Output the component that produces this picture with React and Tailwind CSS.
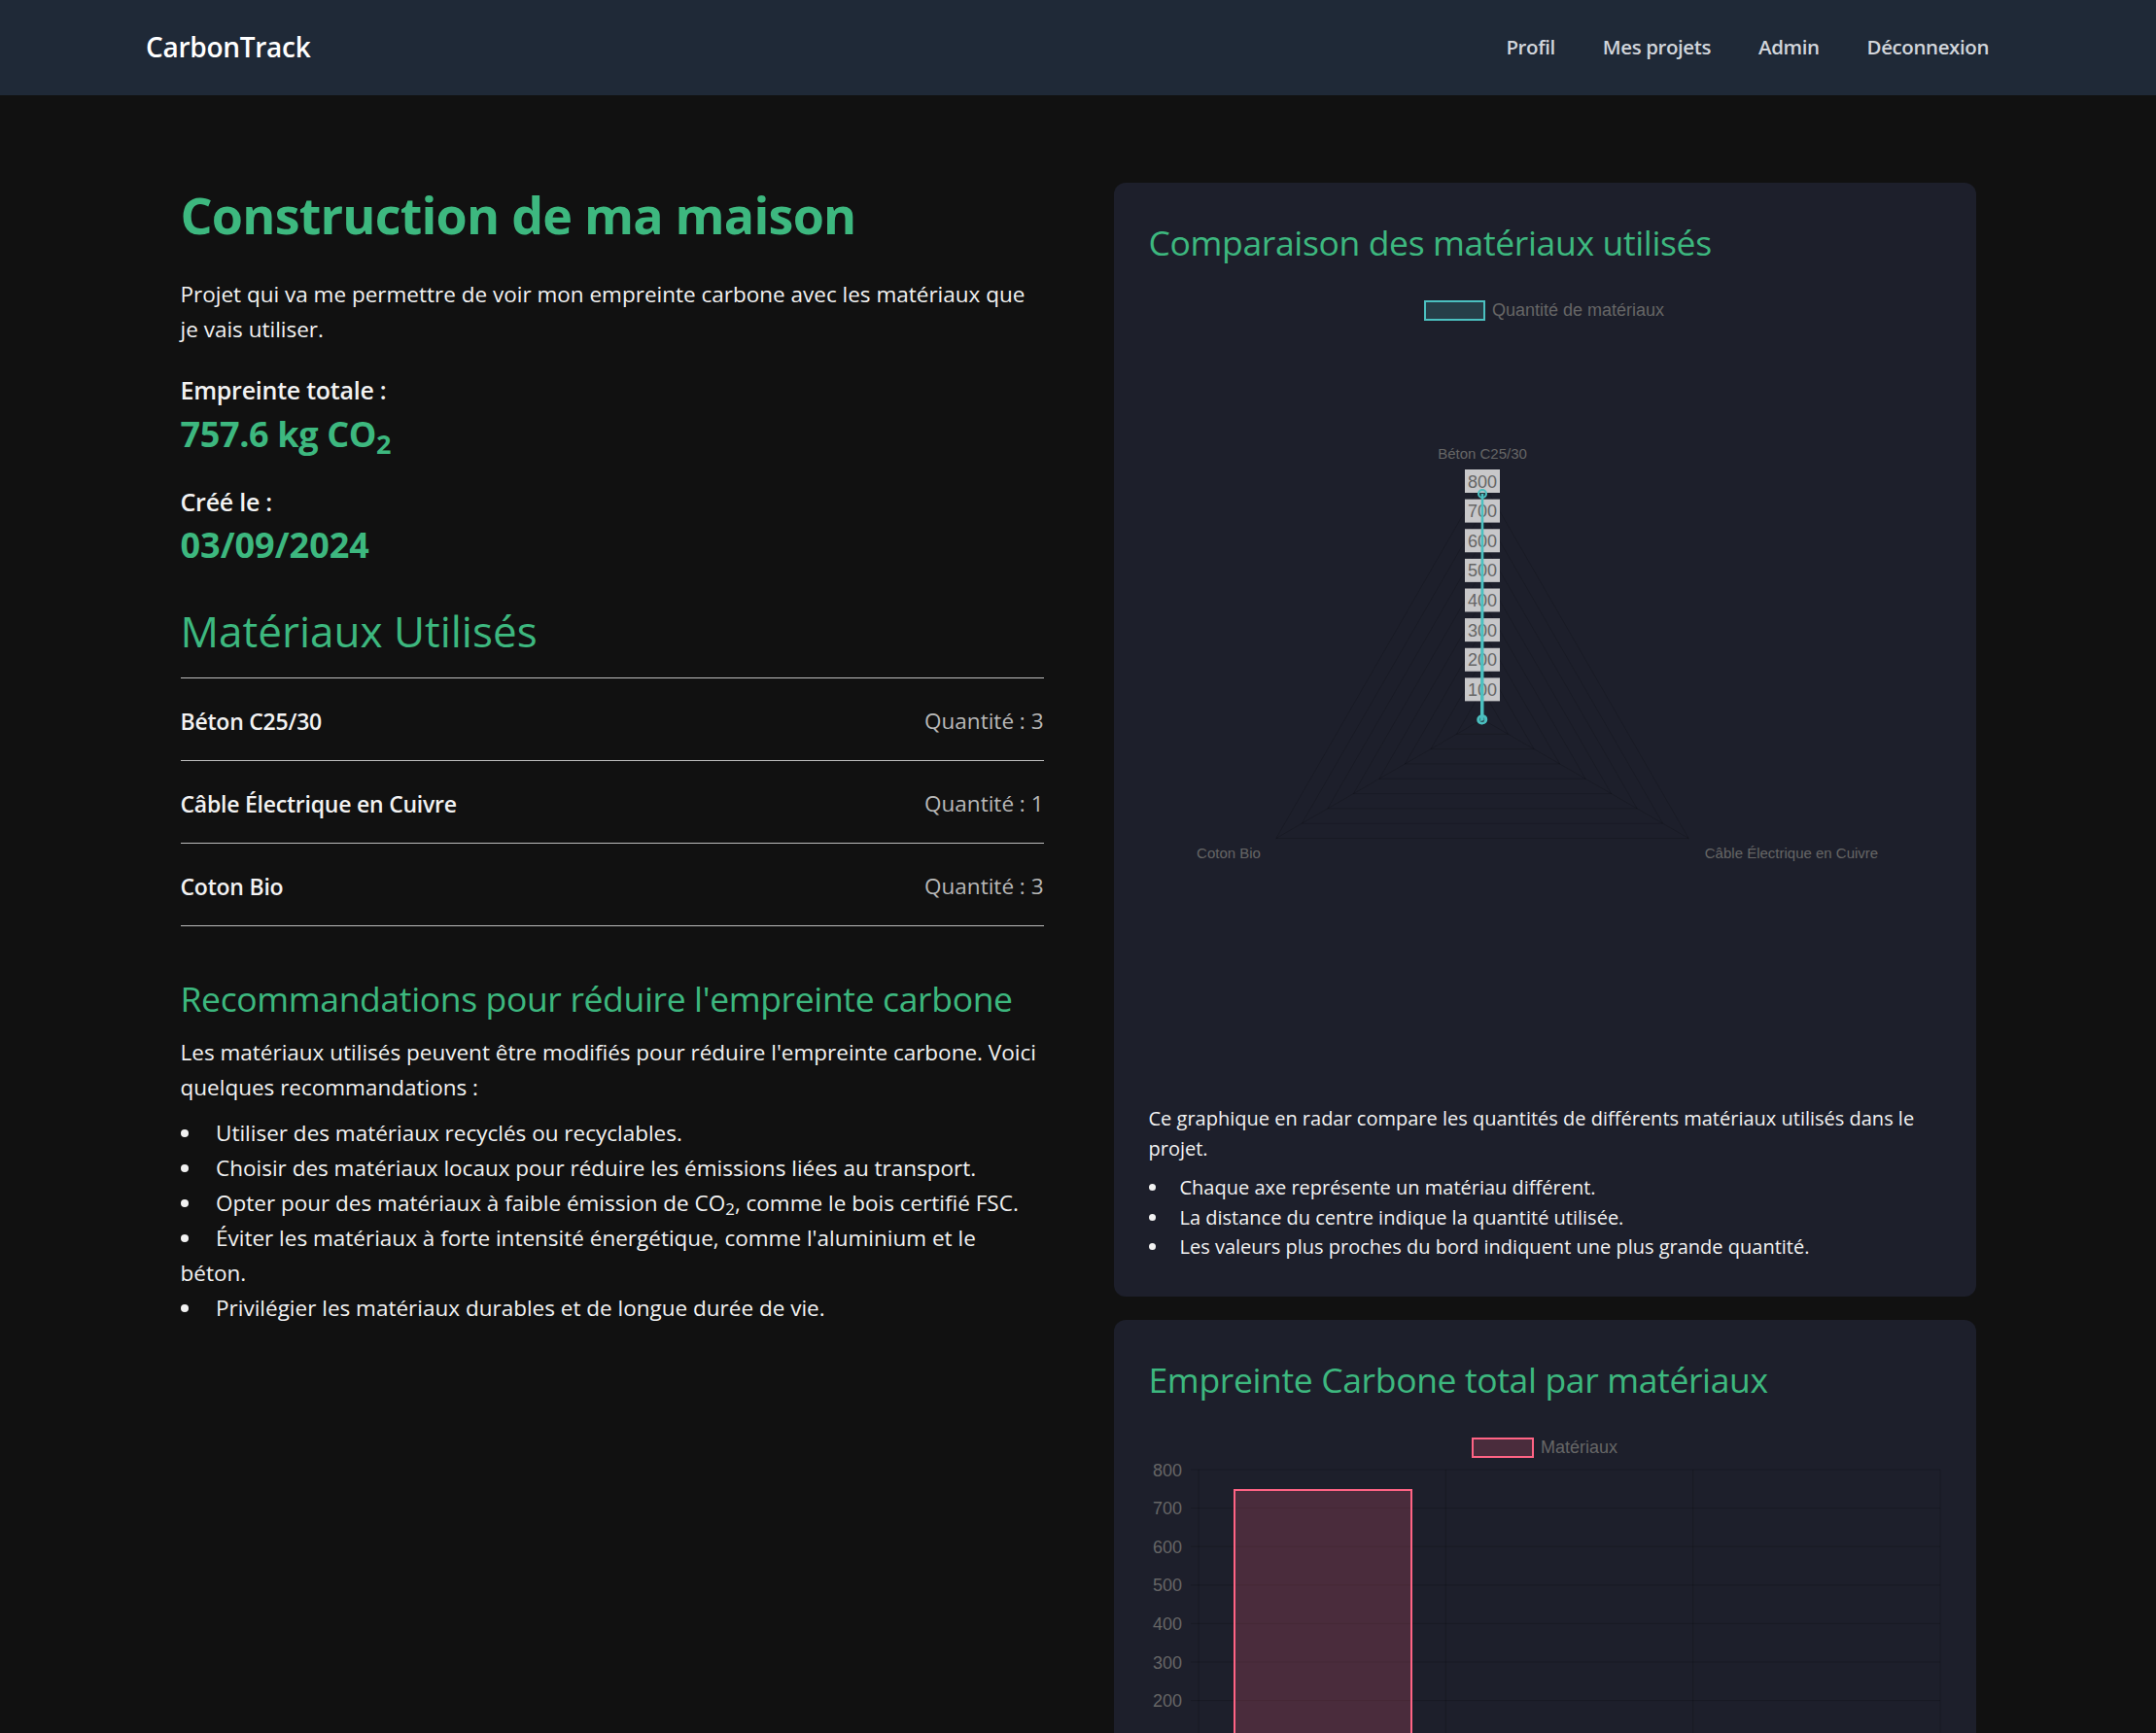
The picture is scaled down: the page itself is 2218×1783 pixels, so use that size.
import React from "react";

const materials = [
    { name: "Béton C25/30", qty: 3 },
    { name: "Câble Électrique en Cuivre", qty: 1 },
    { name: "Coton Bio", qty: 3 },
];

// radar geometry (chart coordinates)
const CX = 343;
const CY = 450;
const R = 245;

const pt = (r, i) => {
    const a = (-90 + i * 120) * (Math.PI / 180);
    return [CX + r * Math.cos(a), CY + r * Math.sin(a)];
};

const RadarChart = () => {
    const rings = [1, 2, 3, 4, 5, 6, 7, 8];
    const values = [757.6, 1, 3];
    const data = values.map((v, i) => pt((v / 800) * R, i));

    return (
        <svg width="815" height="845" className="block mt-[19px]" style={{ fontFamily: '"Liberation Sans", Arial, sans-serif' }}>
            {/* legend */}
            <rect x="284" y="20" width="61" height="19" fill="rgba(75,192,192,0.2)" stroke="#4bc0c0" strokeWidth="2" />
            <text x="353" y="35" fontSize="18" fill="#666">Quantité de matériaux</text>

            {/* grid */}
            {rings.map((k) => (
                <polygon
                    key={k}
                    points={[0, 1, 2].map((i) => pt(k * (R / 8), i).join(",")).join(" ")}
                    fill="none"
                    stroke="rgba(0,0,0,0.15)"
                    strokeWidth="1"
                />
            ))}
            {[0, 1, 2].map((i) => {
                const [x, y] = pt(R, i);
                return <line key={i} x1={CX} y1={CY} x2={x} y2={y} stroke="rgba(0,0,0,0.15)" strokeWidth="1" />;
            })}

            {/* point labels */}
            <text x={CX} y="182" fontSize="15" fill="#666" textAnchor="middle">Béton C25/30</text>
            <text x="82" y="593" fontSize="15" fill="#666" textAnchor="middle">Coton Bio</text>
            <text x="661" y="593" fontSize="15" fill="#666" textAnchor="middle">Câble Électrique en Cuivre</text>

            {/* ticks */}
            {rings.map((k) => {
                const y = CY - k * (R / 8);
                return (
                    <g key={k}>
                        <rect x={CX - 18} y={y - 12} width="36" height="24" fill="#c8c8ca" />
                        <text x={CX} y={y + 6.5} fontSize="18" fill="#666" textAnchor="middle">{k * 100}</text>
                    </g>
                );
            })}

            {/* dataset */}
            <polygon points={data.map((p) => p.join(",")).join(" ")} fill="rgba(75,192,192,0.2)" stroke="#4bc0c0" strokeWidth="2.5" />
            {data.map(([x, y], i) => (
                <circle key={i} cx={x} cy={y} r="4" fill="rgba(75,192,192,0.2)" stroke="#4bc0c0" strokeWidth="2" />
            ))}
        </svg>
    );
};

const BarChart = () => {
    const top = 53;
    const step = 39.6;
    const bottom = top + step * 8;
    const left = 51;
    const right = 814;
    const col = (right - left) / 3;
    const labels = ["Béton C25/30", "Câble Électrique en Cuivre", "Coton Bio"];

    return (
        <svg width="815" height="430" className="block mt-[18px]" style={{ fontFamily: '"Liberation Sans", Arial, sans-serif' }}>
            {/* legend */}
            <rect x="333" y="21" width="62" height="19" fill="rgba(255,99,132,0.2)" stroke="#ff6384" strokeWidth="2" />
            <text x="403" y="36" fontSize="18" fill="#666">Matériaux</text>

            {/* grid */}
            {[8, 7, 6, 5, 4, 3, 2, 1, 0].map((v, i) => {
                const y = top + step * i;
                return (
                    <g key={v}>
                        <line x1={left - 8} y1={y} x2={right} y2={y} stroke="rgba(0,0,0,0.18)" strokeWidth="1" />
                        <text x="34" y={y + 6.5} fontSize="18" fill="#666" textAnchor="end">{v * 100}</text>
                    </g>
                );
            })}
            {[0, 1, 2, 3].map((i) => (
                <line key={i} x1={left + col * i} y1={top} x2={left + col * i} y2={bottom + 8} stroke="rgba(0,0,0,0.18)" strokeWidth="1" />
            ))}

            {/* bar */}
            <rect x="88" y="74" width="182" height={bottom - 74} fill="rgba(255,99,132,0.2)" stroke="#ff6384" strokeWidth="2" />

            {labels.map((l, i) => (
                <text key={l} x={left + col * i + col / 2} y={bottom + 28} fontSize="18" fill="#666" textAnchor="middle">{l}</text>
            ))}
        </svg>
    );
};

const App = () => {
    return (
        <div className="min-h-screen bg-[#111111] font-['Open_Sans','Noto_Sans',sans-serif] text-[#f2f2f2]">
            {/* NAVBAR */}
            <div className="flex h-[98px] items-center justify-between bg-[#1f2937] pl-[150px] pr-[172px] pb-[2px]">
                <div className="text-[28px] font-semibold text-white tracking-[-0.01em]">CarbonTrack</div>
                <div className="flex items-center gap-[49px] text-[20.5px] font-semibold text-[#d1d5db] tracking-[-0.02em]">
                    <a>Profil</a>
                    <a>Mes projets</a>
                    <a>Admin</a>
                    <a>Déconnexion</a>
                </div>
            </div>

            {/* CONTENT */}
            <div className="mx-auto grid w-[1847px] grid-cols-[888px_887px] items-start gap-x-[72px] pt-[89px]">
                {/* left column */}
                <div className="flex flex-col">
                    <h1 className="text-[52px] font-bold leading-[68px] text-[#3db87f] tracking-[-0.015em]">Construction de ma maison</h1>
                    <p className="mt-[30px] text-[22.5px] leading-[36px]">
                        Projet qui va me permettre de voir mon empreinte carbone avec les matériaux que je vais utiliser.
                    </p>

                    <div className="mt-[26px] text-[25px] font-semibold leading-[36px] tracking-[-0.01em]">Empreinte totale :</div>
                    <div className="mt-[5px] text-[36px] font-bold leading-[46px] text-[#3db87f] tracking-[-0.01em]">
                        757.6 kg CO<sub>2</sub>
                    </div>

                    <div className="mt-[28px] text-[25px] font-semibold leading-[36px] tracking-[-0.01em]">Créé le :</div>
                    <div className="mt-[4px] text-[36px] font-bold leading-[46px] text-[#3db87f]">03/09/2024</div>

                    <h2 className="mt-[37px] text-[44px] font-medium leading-[56px] text-[#3db87f]">Matériaux Utilisés</h2>

                    <div className="mt-[20px] border-t border-[#bdbdbd]">
                        {materials.map((m) => (
                            <div key={m.name} className="flex h-[85px] items-center justify-between border-b border-[#bdbdbd] pt-[4px]">
                                <span className="text-[23px] font-semibold tracking-[-0.01em]">{m.name}</span>
                                <span className="text-[22.5px] text-[#b8b8b8]">Quantité : {m.qty}</span>
                            </div>
                        ))}
                    </div>

                    <h3 className="mt-[52px] text-[35.5px] leading-[44px] text-[#3db87f] tracking-[-0.01em]">
                        Recommandations pour réduire l'empreinte carbone
                    </h3>
                    <p className="mt-[16px] text-[22.5px] leading-[36px]">
                        Les matériaux utilisés peuvent être modifiés pour réduire l'empreinte carbone. Voici quelques recommandations :
                    </p>
                    <ul className="mt-[11px] list-inside list-disc text-[22.5px] leading-[36px]">
                        <li><span className="ml-[5px]">Utiliser des matériaux recyclés ou recyclables.</span></li>
                        <li><span className="ml-[5px]">Choisir des matériaux locaux pour réduire les émissions liées au transport.</span></li>
                        <li><span className="ml-[5px]">Opter pour des matériaux à faible émission de CO<sub>2</sub>, comme le bois certifié FSC.</span></li>
                        <li><span className="ml-[5px]">Éviter les matériaux à forte intensité énergétique, comme l'aluminium et le</span><br />béton.</li>
                        <li><span className="ml-[5px]">Privilégier les matériaux durables et de longue durée de vie.</span></li>
                    </ul>
                </div>

                {/* right column */}
                <div className="flex flex-col gap-[24px]">
                    {/* radar card */}
                    <div className="mt-[1px] rounded-[12px] bg-[#1d1f2b] px-[36px] pt-[39px] pb-[35px]">
                        <h3 className="text-[35.5px] leading-[44px] text-[#3db87f] tracking-[-0.01em]">Comparaison des matériaux utilisés</h3>
                        <RadarChart />
                        <p className="text-[20px] leading-[31px]">
                            Ce graphique en radar compare les quantités de différents matériaux utilisés dans le projet.
                        </p>
                        <ul className="mt-[10px] list-inside list-disc text-[20px] leading-[30.5px]">
                            <li><span className="ml-[4px]">Chaque axe représente un matériau différent.</span></li>
                            <li><span className="ml-[4px]">La distance du centre indique la quantité utilisée.</span></li>
                            <li><span className="ml-[4px]">Les valeurs plus proches du bord indiquent une plus grande quantité.</span></li>
                        </ul>
                    </div>

                    {/* bar card */}
                    <div className="rounded-[12px] bg-[#1d1f2b] px-[36px] pt-[39px] pb-[32px]">
                        <h3 className="text-[35.5px] leading-[44px] text-[#3db87f] tracking-[-0.01em]">Empreinte Carbone total par matériaux</h3>
                        <BarChart />
                    </div>
                </div>
            </div>
        </div>
    );
};

export default App;
